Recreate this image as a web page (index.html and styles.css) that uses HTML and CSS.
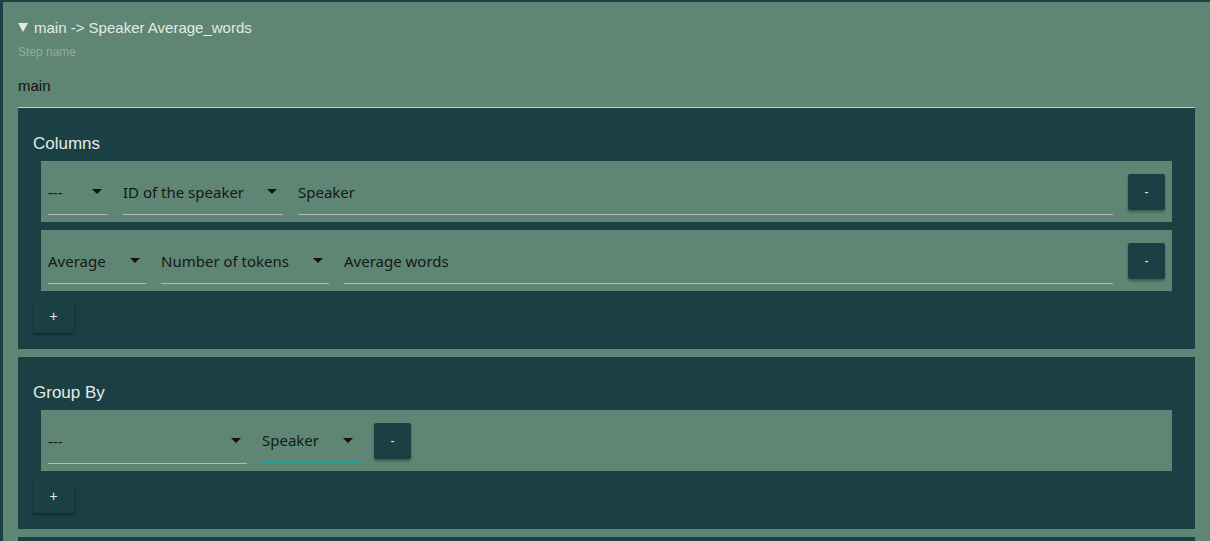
FILE: index.html
```html
<!DOCTYPE html>
<html>
<head>
<meta charset="utf-8">
<link rel="stylesheet" href="styles.css">
</head>
<body>
<div class="page">
  <div class="summary"><i class="tri"></i><span>main -&gt; Speaker Average_words</span></div>
  <div class="label">Step name</div>
  <div class="stepname">main</div>

  <section class="panel">
    <div class="panel-title">Columns</div>
    <div class="row">
      <div class="select w60"><span>---</span><i class="caret"></i></div>
      <div class="select w160"><span>ID of the speaker</span><i class="caret"></i></div>
      <div class="text grow"><span>Speaker</span></div>
      <button class="btn minus">-</button>
    </div>
    <div class="row">
      <div class="select w98"><span>Average</span><i class="caret"></i></div>
      <div class="select w168"><span>Number of tokens</span><i class="caret"></i></div>
      <div class="text grow"><span>Average words</span></div>
      <button class="btn minus">-</button>
    </div>
    <button class="btn plus">+</button>
  </section>

  <section class="panel">
    <div class="panel-title">Group By</div>
    <div class="row">
      <div class="select w199"><span>---</span><i class="caret"></i></div>
      <div class="select w97 focused"><span>Speaker</span><i class="caret"></i></div>
      <button class="btn minus">-</button>
    </div>
    <button class="btn plus">+</button>
  </section>

  <section class="panel"></section>
</div>
</body>
</html>
```

FILE: styles.css
```css
html, body {
  margin: 0;
  padding: 0;
}
body {
  background: #1b4044;
  font-family: "Liberation Sans", Arial, sans-serif;
  height: 541px;
  overflow: hidden;
}
.page {
  margin: 2px 0 0 3px;
  background: #5f8674;
  padding: 17px 15px 0 15px;
  min-height: 600px;
}
.summary {
  color: #e3ebe7;
  font-size: 15px;
  line-height: 18px;
  display: flex;
  align-items: center;
}
.tri {
  width: 0;
  height: 0;
  border-left: 5px solid transparent;
  border-right: 5px solid transparent;
  border-top: 9px solid #e3ebe7;
  margin-right: 6px;
  margin-top: -1px;
}
.label {
  color: #93aa9e;
  font-size: 12px;
  line-height: 14px;
  margin-top: 8px;
}
.stepname {
  color: #111;
  font-size: 15px;
  line-height: 18px;
  margin-top: 18px;
  padding-bottom: 12px;
  border-bottom: 1px solid #c8cfcb;
}
.panel {
  background: #1b4044;
  padding: 26px 23px 16px 15px;
  margin-bottom: 8px;
}
.panel-title {
  color: #e3ebe7;
  font-size: 17px;
  line-height: 20px;
  margin-bottom: 7px;
}
.row {
  background: #5f8674;
  margin-left: 8px;
  height: 61px;
  padding: 0 7px;
  display: flex;
  align-items: center;
  gap: 15px;
  margin-bottom: 8px;
}
.select, .text {
  box-sizing: border-box;
  height: 40px;
  margin-top: 6px;
  border-bottom: 1px solid #b5b7b2;
  display: flex;
  align-items: center;
  justify-content: space-between;
  color: #141816;
  font-family: "Noto Sans", "Open Sans", sans-serif;
  font-size: 15px;
}
.select span, .text span {
  margin-top: -5px;
}
.select.focused {
  border-bottom: 2px solid #17a59e;
}
.caret {
  width: 0;
  height: 0;
  border-left: 5px solid transparent;
  border-right: 5px solid transparent;
  border-top: 5px solid #111;
  margin-right: 6px;
  margin-top: -5px;
}
.w60 { width: 60px; }
.w160 { width: 160px; }
.w98 { width: 98px; }
.w168 { width: 168px; }
.w199 { width: 199px; }
.w97 { width: 97px; }
.grow { flex: 1; }
.btn {
  background: #1b4044;
  color: #e3ebe7;
  border: none;
  border-radius: 2px;
  box-shadow: 0 2px 3px rgba(0,0,0,0.35);
  font-family: "Liberation Sans", Arial, sans-serif;
  font-size: 12px;
  padding: 0;
  cursor: pointer;
}
.btn.minus {
  width: 37px;
  height: 36px;
  margin-top: 0;
}
.btn.plus {
  width: 41px;
  height: 34px;
  margin-top: 0;
  display: block;
  font-size: 14px;
}
```
